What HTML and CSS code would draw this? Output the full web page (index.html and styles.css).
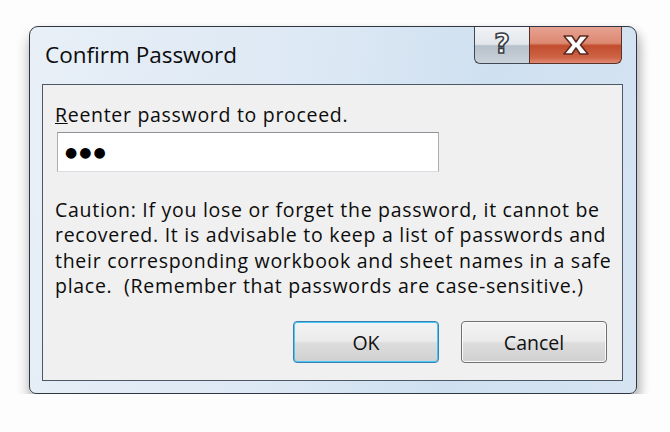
FILE: index.html
```html
<!DOCTYPE html>
<html lang="en">
<head>
  <meta charset="UTF-8">
  <title>Confirm Password</title>
  <link rel="stylesheet" href="styles.css">
</head>
<body>
  <div class="dialog">
    <div class="titleBar">
      <div class="titleText">Confirm Password</div>
      <div class="captionButtons">
        <div class="helpButton">?</div>
        <div class="closeButton">
          <svg width="30" height="22" viewBox="0 0 30 22">
            <path d="M3 2 H11 L15 8 L19 2 H27 L19.5 11 L27 20 H19 L15 14 L11 20 H3 L10.5 11 Z" fill="#fdfdfd" stroke="#5b2b22" stroke-width="1.6" stroke-linejoin="round"/>
          </svg>
        </div>
      </div>
    </div>

    <div class="panel">
      <label class="prompt" for="passwordField"><u>R</u>eenter password to proceed.</label>
      <div class="passwordField" id="passwordField">&#9679;&#9679;&#9679;</div>

      <p class="caution">
        Caution: If you lose or forget the password, it cannot be<br>
        recovered. It is advisable to keep a list of passwords and<br>
        their corresponding workbook and sheet names in a safe<br>
        place.&nbsp; (Remember that passwords are case-sensitive.)
      </p>

      <div class="buttonRow">
        <button class="dialogButton defaultButton">OK</button>
        <button class="dialogButton">Cancel</button>
      </div>
    </div>
  </div>
</body>
</html>
```

FILE: styles.css
```css
body {
  margin: 0;
  padding: 26px 0 0 29px;
  background-color: #fdfdfd;
  font-family: "Open Sans", "Noto Sans", Arial, sans-serif;
  color: #0c0c0c;
}

.dialog {
  width: 581px;
  height: 354px;
  border: 1px solid #2f3842;
  border-radius: 9px 9px 7px 7px;
  background: linear-gradient(100deg, #e8eff7 0%, #dce8f4 45%, #cfe0f0 70%, #d6e4f2 100%);
  box-shadow: 0 10px 14px rgba(0, 0, 0, 0.28), 4px 4px 10px rgba(0, 0, 0, 0.12);
  padding: 0 13px 12px 12px;
  display: flex;
  flex-direction: column;
}

.titleBar {
  display: flex;
  justify-content: space-between;
  align-items: flex-start;
  flex-shrink: 0;
  height: 57px;
  box-sizing: border-box;
}

.titleText {
  padding: 14px 0 0 3px;
  font-size: 22.5px;
  line-height: 28px;
}

.captionButtons {
  display: flex;
  margin-right: 1px;
}

.helpButton {
  width: 55px;
  height: 37px;
  box-sizing: border-box;
  border: 1px solid #3d4956;
  border-top: none;
  border-right: none;
  border-radius: 0 0 0 6px;
  background: linear-gradient(#f1f3f5 0%, #e3e7eb 48%, #b7c1cb 52%, #cad2da 100%);
  text-align: center;
  font-family: "DejaVu Sans", sans-serif;
  font-weight: bold;
  font-size: 27px;
  line-height: 34px;
  color: #fafafa;
  -webkit-text-stroke: 1.6px #3b4047;
}

.closeButton {
  width: 93px;
  height: 37px;
  box-sizing: border-box;
  border: 1px solid #5a3128;
  border-top: none;
  border-radius: 0 0 6px 0;
  background: linear-gradient(#e6a292 0%, #dd8871 45%, #c24c2e 52%, #cf6446 85%, #e08a73 100%);
  display: flex;
  justify-content: center;
  align-items: center;
}

.panel {
  flex: 1;
  min-height: 0;
  border: 1px solid #4c5865;
  background-color: #f0f0f0;
  padding: 0 15px 0 12px;
  display: flex;
  flex-direction: column;
}

.prompt {
  display: block;
  margin-top: 17px;
  font-size: 19.5px;
  line-height: 26px;
  letter-spacing: 0.7px;
}

.prompt u {
  text-decoration-thickness: 1px;
}

.passwordField {
  width: 382px;
  height: 40px;
  box-sizing: border-box;
  margin: 4px 0 0 2px;
  border: 1px solid #abadb3;
  border-top-color: #8e9296;
  border-bottom-color: #d9dde2;
  background-color: #fff;
  padding-left: 7px;
  font-family: "DejaVu Sans", sans-serif;
  font-size: 14px;
  line-height: 38px;
  letter-spacing: 2px;
  color: #000;
}

.caution {
  margin: 25px 0 0 0;
  font-size: 19.5px;
  line-height: 25.3px;
  letter-spacing: 0.72px;
  white-space: nowrap;
}

.buttonRow {
  display: flex;
  justify-content: flex-end;
  gap: 22px;
  margin-top: auto;
  margin-bottom: 17px;
}

.dialogButton {
  width: 146px;
  height: 42px;
  border: 1px solid #707070;
  border-radius: 4px;
  background: linear-gradient(#f3f3f3 0%, #ebebeb 48%, #dddddd 52%, #d0d0d0 100%);
  box-shadow: inset 0 0 0 1px #fbfbfb;
  font-family: inherit;
  font-size: 19.5px;
  color: #111;
  padding: 0;
}

.defaultButton {
  border-color: #3c7fb1;
  box-shadow: inset 0 0 0 1px #48c6f5;
}
```
